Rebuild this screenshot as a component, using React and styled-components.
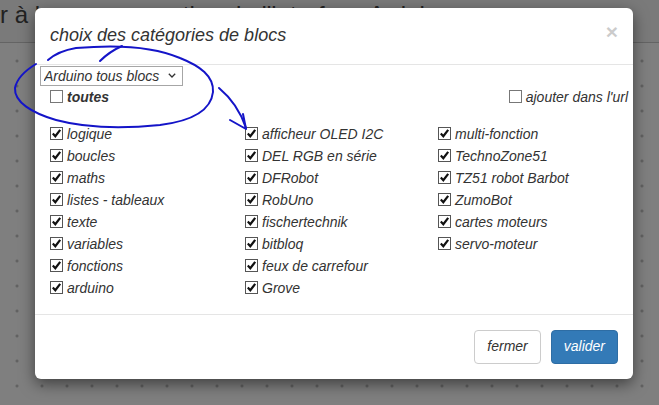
import React from 'react'
import styled, { createGlobalStyle } from 'styled-components'

const GlobalStyle = createGlobalStyle`
    html, body {
        margin: 0;
        padding: 0;
    }
    body {
        font-family: "Liberation Sans", Arial, sans-serif;
        color: #333;
    }
`;

const Page = styled.div`
    position: relative;
    width: 659px;
    height: 405px;
    overflow: hidden;
    display: flex;
    flex-direction: column;
    background: #fff;
`;

const TopBar = styled.div`
    height: 43px;
    flex-shrink: 0;
    box-sizing: border-box;
    background: #f4f4f4;
    border-bottom: 1px solid #c8c8c8;
    font-size: 24px;
    line-height: 24px;
    padding-top: 3px;
    color: #444;
    white-space: nowrap;
`;

const Workspace = styled.div`
    flex: 1;
    background-color: #fff;
    background-image: radial-gradient(circle, #b5b5b5 1px, transparent 1.5px);
    background-size: 25px 25px;
    background-position: 4.5px 5.5px;
`;

const Backdrop = styled.div`
    position: absolute;
    inset: 0;
    background: rgba(0, 0, 0, 0.5);
    display: flex;
    align-items: flex-start;
    padding: 8px 0 0 35px;
`;

const Modal = styled.div`
    width: 598px;
    background: #fff;
    border-radius: 6px;
    box-shadow: 0 5px 15px rgba(0, 0, 0, 0.5);
    display: flex;
    flex-direction: column;
`;

const Header = styled.div`
    display: flex;
    justify-content: space-between;
    align-items: flex-start;
    padding: 15px;
    border-bottom: 1px solid #e5e5e5;
`;

const Title = styled.h4`
    margin: 0;
    font-size: 18px;
    font-weight: normal;
    font-style: italic;
    line-height: 1.42857;
    color: #333;
`;

const Close = styled.button`
    border: none;
    background: none;
    padding: 0;
    margin-top: -2px;
    font-family: "Liberation Sans", Arial, sans-serif;
    font-size: 21px;
    font-weight: bold;
    line-height: 1;
    color: #000;
    opacity: 0.2;
`;

const Body = styled.div`
    padding: 1px 5px 15px 5px;
    display: flex;
    flex-direction: column;
`;

const SelectBox = styled.div`
    display: flex;
    align-items: center;
    width: 143px;
    height: 20px;
    box-sizing: border-box;
    border: 1px solid #a6a6a6;
    padding-right: 6px;
`;

const Select = styled.select`
    flex: 1;
    min-width: 0;
    appearance: none;
    border: none;
    background: none;
    outline: none;
    font-family: "Liberation Sans", Arial, sans-serif;
    font-size: 14px;
    font-style: italic;
    color: #333;
    padding: 0 0 0 3px;
    height: 18px;
`;

const TopRow = styled.div`
    display: flex;
    justify-content: space-between;
    align-items: center;
    height: 22px;
    padding: 0 0 0 10px;
    margin-bottom: 15px;
`;

const Grid = styled.div`
    display: grid;
    grid-template-columns: 195px 193px 1fr;
    grid-template-rows: repeat(8, 22px);
    grid-auto-flow: column;
    padding-left: 10px;
`;

const Label = styled.label`
    display: flex;
    align-items: center;
    gap: 4px;
    font-size: 14px;
    font-style: italic;
    font-weight: ${(props) => (props.bold ? 'bold' : 'normal')};
    color: #333;
    white-space: nowrap;
`;

const Box = styled.span`
    width: 13px;
    height: 13px;
    box-sizing: border-box;
    border: 1px solid ${(props) => (props.checked ? '#555' : '#777')};
    background: #fff;
    display: flex;
    align-items: center;
    justify-content: center;
    flex-shrink: 0;
`;

const Footer = styled.div`
    display: flex;
    justify-content: flex-end;
    gap: 10px;
    padding: 15px;
    border-top: 1px solid #e5e5e5;
`;

const Button = styled.button`
    font-family: "Liberation Sans", Arial, sans-serif;
    font-size: 14px;
    font-style: italic;
    line-height: 1.42857;
    padding: 6px 12px;
    border-radius: 4px;
    border: 1px solid ${(props) => (props.primary ? '#2e6da4' : '#ccc')};
    background: ${(props) => (props.primary ? '#337ab7' : '#fff')};
    color: ${(props) => (props.primary ? '#fff' : '#333')};
`;

const Scribble = styled.svg`
    position: absolute;
    left: 0;
    top: 0;
    pointer-events: none;
`;

const Check = ({ checked }) => (
    <Box checked={checked}>
        {checked && (
            <svg width="11" height="11" viewBox="0 0 11 11">
                <path d="M1.8 5.6 L4.3 8.2 L9.2 1.9" fill="none" stroke="#111" strokeWidth="2.2" />
            </svg>
        )}
    </Box>
);

const Item = ({ label, checked = true, bold }) => (
    <Label bold={bold}>
        <Check checked={checked} />
        {label}
    </Label>
);

const categories = [
    'logique', 'boucles', 'maths', 'listes - tableaux', 'texte', 'variables', 'fonctions', 'arduino',
    'afficheur OLED I2C', 'DEL RGB en série', 'DFRobot', 'RobUno', 'fischertechnik', 'bitbloq', 'feux de carrefour', 'Grove',
    'multi-fonction', 'TechnoZone51', 'TZ51 robot Barbot', 'ZumoBot', 'cartes moteurs', 'servo-moteur',
];

export default function App() {
    return (
        <>
            <GlobalStyle />
            <Page>
                <TopBar>r à la programmation de l'interface Arduino</TopBar>
                <Workspace />
                <Backdrop>
                    <Modal>
                        <Header>
                            <Title>choix des catégories de blocs</Title>
                            <Close>×</Close>
                        </Header>
                        <Body>
                            <SelectBox>
                                <Select defaultValue="all">
                                    <option value="all">Arduino tous blocs</option>
                                </Select>
                                <svg width="8" height="5" viewBox="0 0 8 5">
                                    <path d="M0.8 0.8 L4 4 L7.2 0.8" fill="none" stroke="#333" strokeWidth="1.3" />
                                </svg>
                            </SelectBox>
                            <TopRow>
                                <Item label="toutes" checked={false} bold />
                                <Item label="ajouter dans l'url" checked={false} />
                            </TopRow>
                            <Grid>
                                {categories.map((c) => (
                                    <Item key={c} label={c} />
                                ))}
                            </Grid>
                        </Body>
                        <Footer>
                            <Button>fermer</Button>
                            <Button primary>valider</Button>
                        </Footer>
                    </Modal>
                </Backdrop>
                <Scribble width="659" height="405" viewBox="0 0 659 405">
                    <g fill="none" stroke="#1414c8" strokeWidth="2" strokeLinecap="round" strokeLinejoin="round">
                        <path d="M48 60 C56 53 64 50 76 48 C110 45 150 45 180 58 C200 66 214 76 213 92 C211 110 192 121 160 125 C120 129 82 127 56 120 C32 113 14 102 15 88 C17 78 26 70 36 64" />
                        <path d="M100 61 C106 55 113 50 122 46" />
                        <path d="M219 88 C231 98 240 110 246 128" />
                        <path d="M230 120 L246 129 L243 114" />
                    </g>
                </Scribble>
            </Page>
        </>
    )
}
